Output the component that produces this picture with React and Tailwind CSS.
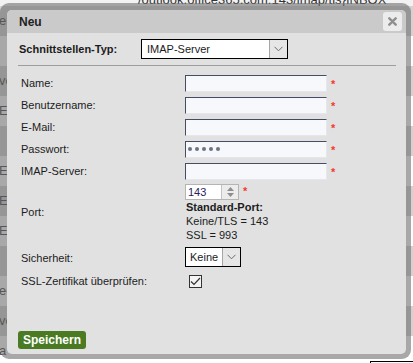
const bgRows = ["er", "", "ve", "E", "", "E", "E", "E", "", "ee", "ve", "a", ""];

const Req = () => (
    <span className="ml-[4px] self-start mt-[4px] text-[11px] leading-none font-bold text-[#f23b2b]">*</span>
);

const TextInput = ({ children }) => (
    <div className="w-[142px] h-[17px] bg-[#f6f8fc] border-t border-l border-t-[#464c61] border-l-[#464c61] border-r border-b border-r-[#e6e7ec] border-b-[#e6e7ec] flex items-center pl-[2px] gap-[3px]">
        {children}
    </div>
);

const Chevron = () => (
    <svg className="w-[9px] h-[6px]" viewBox="0 0 9 6" fill="none" stroke="#6b6b6b" strokeWidth="1">
        <path d="M0.5 0.8 L4.5 4.8 L8.5 0.8" />
    </svg>
);

const Row = ({ label, children }) => (
    <div className="flex items-center h-[22px]">
        <div className="w-[167px] pl-[3px]">{label}</div>
        <div className="flex items-center">{children}</div>
    </div>
);

export default function App() {
    return (
        <div className="relative w-[413px] h-[363px] overflow-hidden bg-[#f2f2f2] text-[11px] text-[#1c1c1c] font-['Liberation_Sans',Arial,sans-serif]">
            {/* page behind the dialog */}
            <div className="flex flex-col">
                <div className="h-[6px] relative overflow-hidden">
                    <span className="absolute left-[138px] -top-[8px] text-[13px] leading-[15px] text-[#333]">
                        /outlook.office365.com:143/imap/tls}INBOX
                    </span>
                </div>
                {bgRows.map((t, i) => (
                    <div
                        key={i}
                        className={`h-[30px] flex items-center text-[13px] text-[#333] -ml-[1px] ${i % 2 ? "bg-white" : "bg-[#d2d2d2]"}`}
                    >
                        {t}
                    </div>
                ))}
            </div>
            <div className="absolute left-[370px] top-[361px] w-[60px] h-[10px] border border-black bg-white" />

            {/* dialog */}
            <div className="absolute left-0 top-[3px] w-[411px] h-[356px] rounded-[9px] bg-[rgba(110,110,110,0.6)] pl-[7px] pt-[7px] pr-[5px] pb-[5px]">
                <div className="w-full h-full rounded-[5px] bg-[#e1e1e1] flex flex-col">
                    {/* title bar */}
                    <div className="h-[23px] bg-[#cacaca] rounded-t-[5px] flex items-center justify-between pl-[12px] pr-[4px]">
                        <span className="text-[12px] font-bold text-[#222]">Neu</span>
                        <div className="w-[19px] h-[19px] rounded-[3px] bg-[#ececec] flex items-center justify-center">
                            <svg className="w-[9px] h-[9px]" viewBox="0 0 9 9" stroke="#8f8f8f" strokeWidth="2.4" strokeLinecap="round">
                                <path d="M1.3 1.3 L7.7 7.7 M7.7 1.3 L1.3 7.7" />
                            </svg>
                        </div>
                    </div>

                    <div className="flex-1 flex flex-col pl-[11px] pr-[10px] pb-[5px]">
                        {/* type select */}
                        <div className="flex items-center mt-[6px] h-[20px]">
                            <div className="w-[123px] pl-[1px] font-bold">Schnittstellen-Typ:</div>
                            <div className="w-[147px] h-[20px] bg-white border border-black flex items-center justify-between">
                                <span className="pl-[5px]">IMAP-Server</span>
                                <div className="w-[18px] h-full bg-[#e6e6e6] border-l border-[#a5a5a5] flex items-center justify-center">
                                    <Chevron />
                                </div>
                            </div>
                        </div>

                        <div className="h-px bg-[#9d9d9d] mt-[6px] mb-[6px]" />

                        <Row label="Name:">
                            <TextInput />
                            <Req />
                        </Row>
                        <Row label="Benutzername:">
                            <TextInput />
                            <Req />
                        </Row>
                        <Row label="E-Mail:">
                            <TextInput />
                            <Req />
                        </Row>
                        <Row label="Passwort:">
                            <TextInput>
                                {[0, 1, 2, 3, 4].map((d) => (
                                    <span key={d} className="w-[4px] h-[4px] rounded-full bg-[#6d7384]" />
                                ))}
                            </TextInput>
                            <Req />
                        </Row>
                        <Row label="IMAP-Server:">
                            <TextInput />
                            <Req />
                        </Row>

                        {/* port */}
                        <div className="flex items-center">
                            <div className="w-[167px] pl-[3px]">Port:</div>
                            <div className="flex flex-col pt-[2px]">
                                <div className="flex items-start">
                                    <div className="w-[54px] h-[16px] bg-white border border-[#b4b4b4] flex items-center justify-between">
                                        <span className="pl-[2px] text-[11px] text-[#2d1a5e]">143</span>
                                        <div className="w-[17px] h-full bg-[#ececec] border-l border-[#c4c4c4] flex flex-col items-center justify-center gap-[2px]">
                                            <svg className="w-[7px] h-[4px]" viewBox="0 0 7 4"><path d="M0 4 L3.5 0 L7 4 Z" fill="#8e8e8e" /></svg>
                                            <svg className="w-[7px] h-[4px]" viewBox="0 0 7 4"><path d="M0 0 L3.5 4 L7 0 Z" fill="#8e8e8e" /></svg>
                                        </div>
                                    </div>
                                    <span className="ml-[4px] mt-[2px] text-[11px] leading-none font-bold text-[#f23b2b]">*</span>
                                </div>
                                <div className="leading-[14px] pl-[1px]">
                                    <div className="font-bold">Standard-Port:</div>
                                    <div>Keine/TLS = 143</div>
                                    <div>SSL = 993</div>
                                </div>
                            </div>
                        </div>

                        {/* security */}
                        <div className="flex items-center h-[27px] pt-[3px]">
                            <div className="w-[167px] pl-[3px] pt-[2px]">Sicherheit:</div>
                            <div className="w-[56px] h-[20px] bg-white border border-black flex items-center justify-between">
                                <span className="pl-[4px] text-[11px]">Keine</span>
                                <div className="w-[18px] h-full bg-[#e6e6e6] border-l border-[#a5a5a5] flex items-center justify-center">
                                    <Chevron />
                                </div>
                            </div>
                        </div>

                        {/* ssl check */}
                        <div className="flex items-center h-[24px]">
                            <div className="w-[171px] pl-[3px]">SSL-Zertifikat überprüfen:</div>
                            <div className="w-[13px] h-[13px] border border-[#333] bg-[#f4f4f4] flex items-center justify-center">
                                <svg className="w-[11px] h-[9px]" viewBox="0 0 11 9" fill="none" stroke="#333" strokeWidth="1.2">
                                    <path d="M1 4.5 L4 7.5 L10 1" />
                                </svg>
                            </div>
                        </div>

                        <div className="mt-auto">
                            <button className="h-[18px] w-[68px] rounded-[3px] bg-[#4a7b22] text-white text-[12px] font-bold flex items-center justify-center">
                                Speichern
                            </button>
                        </div>
                    </div>
                </div>
            </div>
        </div>
    );
}
